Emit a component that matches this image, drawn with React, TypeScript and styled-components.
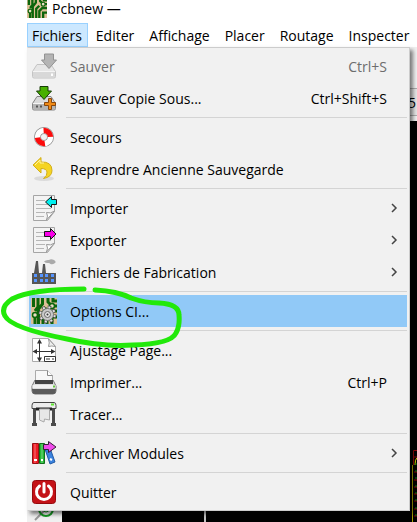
import React from 'react';
import styled, { createGlobalStyle, css } from 'styled-components';

const Global = createGlobalStyle`
  * { box-sizing: border-box; }
  html, body { margin: 0; background: #fff; overflow: hidden; }
  body, button { font-family: "Open Sans", "Noto Sans", sans-serif; font-size: 14px; color: #000; }
`;

const Page = styled.div`
  position: relative;
  min-height: 100vh;
  padding-left: 27px;
  display: flex;
`;
const AppWindow = styled.div`
  flex: 1;
  min-width: 0;
  display: flex;
  flex-direction: column;
`;
const TitleBar = styled.header`
  display: flex;
  gap: 5px;
  height: 23px;
  line-height: 18px;
  svg { margin-top: -2px; }
`;
const MenuBar = styled.nav`
  position: relative;
  display: flex;
  gap: 1px;
  height: 24px;
`;
const MenuTitle = styled.button<{ $open?: boolean }>`
  flex: none;
  padding: 2px 6px 0;
  height: 24px;
  line-height: 20px;
  border: 1px solid transparent;
  background: transparent;
  white-space: nowrap;
  ${p => p.$open && css`
    padding: 2px 5px 0 4px;
    background: #cce8ff;
    border-color: #99d1ff;
  `}
`;
const Popup = styled.div`
  position: absolute;
  z-index: 2;
  top: 100%;
  left: 0;
  right: 7px;
  padding: 2px 2px 2px 1px;
  border: 1px solid #ccc;
  border-left-color: #f0f0f0;
  background: #f1f1f1;
  box-shadow: 3px 3px 4px rgba(0, 0, 0, 0.5);
`;
const Item = styled.button<{ $active?: boolean }>`
  display: grid;
  grid-template-columns: 39px 1fr auto;
  align-items: center;
  width: 100%;
  height: 32px;
  padding: 0 20px 0 2px;
  border: 0;
  text-align: left;
  line-height: 20px;
  background: ${p => (p.$active ? '#91c9f7' : 'transparent')};
  &:disabled { color: #6d6d6d; }
`;
const ItemText = styled.span`
  padding-top: 2px;
`;
const Arrow = styled.svg`
  justify-self: end;
  margin-right: -11px;
`;
const Separator = styled.hr`
  height: 1px;
  margin: 3px 0 3px 37px;
  border: 0;
  background: #d4d4d4;
`;
const Toolbar = styled.div`
  display: flex;
  justify-content: flex-end;
  align-items: flex-end;
  height: 74px;
  padding-bottom: 5px;
  background: #f0f0f0;
`;
const Field = styled.div`
  width: 10px;
  height: 28px;
  overflow: hidden;
  border: 1px solid #adadad;
  border-right: 0;
  background: #e5e5e5;
  line-height: 28px;
`;
const Workspace = styled.div`
  flex: 1;
  display: flex;
  background: #000;
`;
const SideBar = styled.div`
  width: 35px;
  display: flex;
  align-items: flex-end;
  justify-content: center;
  background: #f0f0f0;
`;
const Canvas = styled.div`
  flex: 1;
  display: flex;
  justify-content: space-between;
  align-items: flex-end;
  padding-left: 142px;
`;
const SheetEdge = styled.div`
  width: 2px;
  align-self: stretch;
  background: #c2c2c2;
`;
const Annotation = styled.svg`
  position: absolute;
  z-index: 3;
  left: 0;
  top: 284px;
  pointer-events: none;
`;

const Svg = ({ size = 26, children }: { size?: number; children: React.ReactNode }) => (
  <svg width={size} height={size} viewBox="0 0 26 26" aria-hidden="true">{children}</svg>
);

const Drive = ({ off }: { off?: boolean }) => (
  <Svg>
    <path d="M6 11.500h14l4.500 7v5q0 1.500-1.500 1.500H3q-1.500 0-1.500-1.500v-5z" fill={off ? '#e6e6e6' : '#dadada'} stroke={off ? '#c4c4c4' : '#858585'} />
    <path d="M2 18.500h22V23q0 1.500-1.500 1.500h-19Q2 24.500 2 23z" fill={off ? '#d8d8d8' : '#b4b4b4'} />
    <path d="M2 18.500h22" stroke="#f4f4f4" />
    {off ? <path d="M21 20.500v2.500" stroke="#fff" strokeWidth="2" /> : <path d="M5 21.500h2m2 0h2" stroke="#555" strokeWidth="2" />}
    {off
      ? <path d="M13.500 1h9v6h3l-7.500 8.500L10.500 7h3z" fill="#b4b4b4" stroke="#929292" />
      : <path d="M9 1.500h8V6h3.500L13 14.500 5.500 6H9z" fill="#48b000" stroke="#163c05" />}
    {!off && <path d="M17.500 13.500h3v4h4v3h-4v4h-3v-4h-4v-3h4z" fill="#f08a16" stroke="#87460c" />}
  </Svg>
);

const Buoy = () => (
  <Svg>
    <circle cx="13" cy="13" r="6.500" fill="none" stroke="#8d8d8d" strokeWidth="7" />
    <circle cx="13" cy="13" r="6.500" fill="none" stroke="#fff" strokeWidth="5.500" />
    <circle cx="13" cy="13" r="6.500" fill="none" stroke="#fb0c0c" strokeWidth="5.500" strokeDasharray="10.210" strokeDashoffset="-9" />
  </Svg>
);

const Undo = () => (
  <Svg>
    <ellipse cx="13" cy="22.500" rx="10" ry="2.500" fill="#ccc" opacity=".6" />
    <path d="M2 9 10 1.500V6q11-.5 11 8.500 0 6.500-8.500 8 4-3 3.500-6.500-.5-3.500-6-3.500V17z" fill="#f5d422" stroke="#d2ae1b" strokeLinejoin="round" />
    <path d="M4 9 9 4v3h4" fill="none" stroke="#fff3a0" />
  </Svg>
);

const Doc = ({ color, out }: { color: string; out?: boolean }) => (
  <Svg>
    <path d="M2.500.5h21v16l-7 9h-14z" fill="#f3f3f3" stroke="#a5a5a5" />
    <path d="M15.500 25q2-4 0-7.500 4 1.500 8-1.500z" fill="#fff" stroke="#999" />
    <path d="M5 5.500h9M5 9.500h13M5 13.500h15M5 17.500h9M5 21.500h8" stroke="#b6b6b6" />
    {out
      ? <path d="M13.500 4.500h6V1.500l5.500 5.500-5.500 5.500v-3h-6z" fill={color} stroke="#161616" />
      : <path d="M25.500 4.500h-5V1.500L14.500 7l6 5.500v-3h5z" fill={color} stroke="#161616" />}
  </Svg>
);

const Factory = () => (
  <Svg>
    <path d="M1 14h2L5 2h2l1 12h3l1-9h2l1 9h10v11H1z" fill="#555" />
    <path d="M13 2.500q2-2 5-1.500 2-1.500 5 0 2 1 1.500 2.500-2 2.500-5 1.500-1-1.500-3-1-2 0-3.500-1.500z" fill="#aaa" />
    <path d="M3 15h3v3H3zm6 0h3v3H9zm5 0h3v3h-3zm6 0h3v3h-3zM3 20h3v3H3zm6 0h3v3H9zm5 0h3v3h-3zm6 0h3v3h-3z" fill="#5594ff" />
  </Svg>
);

const Board = ({ gear, size = 26 }: { gear?: boolean; size?: number }) => (
  <Svg size={size}>
    <path d="M0 0h26v26H0z" fill="#dcc096" />
    <path d="M2.500 0v9M7 0v9l-3 4M11.500 0v6l-4 5v15M12 26V14l4-4M17 0v4l4 4h5M16 26v-9l4-4h6M22 0v3h4M21 26v-7h5M4 19v7" fill="none" stroke="#0b650b" strokeWidth="3" />
    <circle cx="4" cy="17" r="2.500" fill="#e9dcc2" stroke="#0b650b" strokeWidth="1.500" />
    <circle cx="21" cy="8" r="2.500" fill="#e9dcc2" stroke="#0b650b" strokeWidth="1.500" />
    {gear && <>
      <circle cx="16.500" cy="16.500" r="7" fill="none" stroke="#444" strokeWidth="4" strokeDasharray="3.200 2.298" />
      <circle cx="16.500" cy="16.500" r="7" fill="none" stroke="#e2e2e2" strokeWidth="2.500" strokeDasharray="2 3.498" strokeDashoffset="-.6" />
      <circle cx="16.500" cy="16.500" r="6" fill="#c9c9c9" stroke="#777" />
      <circle cx="16.500" cy="16.500" r="3" fill="#e6e6e6" stroke="#666" />
      <circle cx="16.500" cy="16.500" r="1" fill="#333" />
    </>}
  </Svg>
);

const PageSize = () => (
  <Svg>
    <path d="M1.500 1.500h16l7 8v15h-23z" fill="#fff" stroke="#aaa" />
    <path d="M17.500 2q1.500 4 0 7.500 3-1 7 0z" fill="#eee" stroke="#999" />
    <path d="M8.500 4v19M3 14.500h20" stroke="#333" />
    <path d="M6 6.500 8.500 2 11 6.500zm0 14L8.500 25l2.500-4.500zM6 12l-4.500 2.500L6 17zm14 0 4.500 2.500L20 17z" fill="#333" />
    <path d="M13.500 19.500h11v5h-11zM15 22h4m2 0h2" fill="#fff" stroke="#333" />
  </Svg>
);

const Printer = () => (
  <Svg>
    <path d="M4 11h18l3 6v5q0 3-3 3H4q-3 0-3-3v-5z" fill="#ddd" stroke="#777" />
    <path d="M4.500 13.500V1.500h12l5 5v7z" fill="#f7f7f7" stroke="#aaa" />
    <path d="M16.500 1.500v5h5" fill="#fff" stroke="#888" />
    <path d="M4 11h18v4H4z" fill="#444" />
    <path d="M1.500 16h23v3h-23z" fill="#f2f2f2" />
    <path d="M1 20h24q0 5-3 5H4q-3 0-3-5z" fill="#5b5b5b" />
    <path d="M22 17.500h2" stroke="#64c83c" strokeWidth="2" />
  </Svg>
);

const Plotter = () => (
  <Svg>
    <path d="M3.500 6v17M22.500 6v17M1 23.500h5m14 0h5" stroke="#4b4b4b" strokeWidth="3" />
    <path d="M3 1.500h20q2 0 2 3v3H1v-3q0-3 2-3z" fill="#ececec" stroke="#444" />
    <path d="M5 6.500h16v3H5z" fill="#222" />
    <path d="M8.500 8v11l4.500 2 .5-3 5 1V8z" fill="#e7e7e7" stroke="#aaa" />
    <path d="M20 3.500h3" stroke="#5ee831" strokeWidth="2" />
  </Svg>
);

const Library = () => (
  <Svg>
    <path d="M1.500 3.500h6v20h-6z" fill="#ed1c24" stroke="#971016" />
    <path d="M8.500 3.500h5v20h-5z" fill="#25b935" stroke="#146d1d" />
    <path d="m14 9 5-1 5 14-5 2z" fill="#3b83de" stroke="#225ba7" />
    <path d="M4 4v19M11 4v19" stroke="#fff" opacity=".4" />
    <path d="M3 20h3m4 0h2m7-1 2 1" stroke="#fff" strokeWidth="2" />
    <path d="M12.500 4.500h5v-3l7.500 5.500-7.500 5.500v-3h-5z" fill="#ef4bea" stroke="#352035" />
  </Svg>
);

const Power = () => (
  <Svg>
    <rect x="1.500" y="1.500" width="23" height="23" rx="3" fill="#c41217" stroke="#96090d" />
    <path d="M8.500 7a7.500 7.500 0 1 0 9 0M13 4.500V13" fill="none" stroke="#fff" strokeWidth="3" strokeLinecap="round" />
  </Svg>
);

type Entry = { label: string; icon: React.ReactNode; keys?: string; sub?: boolean; off?: boolean; active?: boolean };
const groups: Entry[][] = [
  [
    { label: 'Sauver', icon: <Drive off />, keys: 'Ctrl+S', off: true },
    { label: 'Sauver Copie Sous...', icon: <Drive />, keys: 'Ctrl+Shift+S' },
  ],
  [
    { label: 'Secours', icon: <Buoy /> },
    { label: 'Reprendre Ancienne Sauvegarde', icon: <Undo /> },
  ],
  [
    { label: 'Importer', icon: <Doc color="#00efef" />, sub: true },
    { label: 'Exporter', icon: <Doc color="#f800e8" out />, sub: true },
    { label: 'Fichiers de Fabrication', icon: <Factory />, sub: true },
  ],
  [{ label: 'Options CI...', icon: <Board gear />, active: true }],
  [
    { label: 'Ajustage Page...', icon: <PageSize /> },
    { label: 'Imprimer...', icon: <Printer />, keys: 'Ctrl+P' },
    { label: 'Tracer...', icon: <Plotter /> },
  ],
  [{ label: 'Archiver Modules', icon: <Library />, sub: true }],
  [{ label: 'Quitter', icon: <Power /> }],
];

export default function App() {
  return (
    <Page>
      <Global />
      <AppWindow>
        <TitleBar><Board size={20} /><span>Pcbnew —</span></TitleBar>
        <MenuBar>
          <MenuTitle $open aria-expanded="true">Fichiers</MenuTitle>
          {['Editer', 'Affichage', 'Placer', 'Routage', 'Inspecter'].map(t => <MenuTitle key={t}>{t}</MenuTitle>)}
          <Popup role="menu">
            {groups.map((group, i) => (
              <React.Fragment key={i}>
                {i > 0 && <Separator />}
                {group.map(e => (
                  <Item key={e.label} role="menuitem" disabled={e.off} $active={e.active}>
                    {e.icon}
                    <ItemText>{e.label}</ItemText>
                    {e.keys && <ItemText>{e.keys}</ItemText>}
                    {e.sub && (
                      <Arrow width="8" height="10" viewBox="0 0 8 10">
                        <path d="m2 1 4 4-4 4" fill="none" stroke="#444" strokeWidth="1.500" />
                      </Arrow>
                    )}
                  </Item>
                ))}
              </React.Fragment>
            ))}
          </Popup>
        </MenuBar>
        <Toolbar><Field>5</Field></Toolbar>
        <Workspace>
          <SideBar>
            <svg width="28" height="24" viewBox="0 0 28 24">
              <path d="M4 22 21 5" stroke="#999" strokeWidth="2" />
              <circle cx="15" cy="11" r="7" fill="none" stroke="#159a22" strokeWidth="2" />
              <circle cx="15" cy="11" r="3" fill="none" stroke="#159a22" />
            </svg>
          </SideBar>
          <Canvas>
            <SheetEdge />
            <svg width="5" height="72" viewBox="0 0 5 72">
              <path d="M.5 15v57" stroke="#aaa000" />
              <path d="M1.500 15V.5H5M2 7h3M2 22h3M2 30h3M2 37h3M2 44h3M2 51h3M2 59h3M2 66h3" fill="none" stroke="#8c0707" />
              <path d="M3 15q0-6 2-7" fill="none" stroke="#dfd600" />
              <path d="M3 14h2M3 21h2M3 28h2M3 36h2M3 43h2M3 50h2M3 58h2M3 65h2" stroke="#087c10" />
            </svg>
          </Canvas>
        </Workspace>
      </AppWindow>
      <Annotation width="190" height="66" viewBox="0 0 190 66">
        <path d="M84 5Q31 5 12 15 0 23 5 32 11 44 67 55q35 8 66 6 38-1 43-12 4-7 3-18 0-11-20-12-14 0-28-5Q117 7 95 6" fill="none" stroke="#22e90a" strokeWidth="5" strokeLinecap="round" strokeLinejoin="round" />
      </Annotation>
    </Page>
  );
}
